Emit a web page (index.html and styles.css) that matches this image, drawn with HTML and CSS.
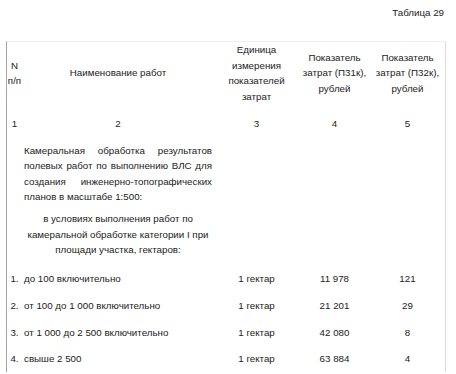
FILE: index.html
```html
<!DOCTYPE html>
<html lang="ru">
<head>
<meta charset="utf-8">
<link rel="stylesheet" href="styles.css">
</head>
<body>
<div class="caption">Таблица 29</div>
<table class="norms">
  <colgroup>
    <col class="c1"><col class="c2"><col class="c3"><col class="c4"><col class="c5">
  </colgroup>
  <tr class="head">
    <td class="num">N п/п</td>
    <td>Наименование работ</td>
    <td>Единица измерения показателей затрат</td>
    <td>Показатель затрат (П31к), рублей</td>
    <td>Показатель затрат (П32к), рублей</td>
  </tr>
  <tr class="idx">
    <td class="num">1</td>
    <td>2</td>
    <td>3</td>
    <td>4</td>
    <td>5</td>
  </tr>
  <tr class="desc">
    <td></td>
    <td class="text">
      <p class="just">Камеральная обработка результатов полевых работ по выполнению ВЛС для создания инженерно-топографических планов в масштабе 1:500:</p>
      <p class="center">в условиях выполнения работ по камеральной обработке категории I при площади участка, гектаров:</p>
    </td>
    <td></td>
    <td></td>
    <td></td>
  </tr>
  <tr class="row">
    <td class="num">1.</td>
    <td class="name">до 100 включительно</td>
    <td>1 гектар</td>
    <td>11 978</td>
    <td>121</td>
  </tr>
  <tr class="row">
    <td class="num">2.</td>
    <td class="name">от 100 до 1 000 включительно</td>
    <td>1 гектар</td>
    <td>21 201</td>
    <td>29</td>
  </tr>
  <tr class="row">
    <td class="num">3.</td>
    <td class="name">от 1 000 до 2 500 включительно</td>
    <td>1 гектар</td>
    <td>42 080</td>
    <td>8</td>
  </tr>
  <tr class="row">
    <td class="num">4.</td>
    <td class="name">свыше 2 500</td>
    <td>1 гектар</td>
    <td>63 884</td>
    <td>4</td>
  </tr>
</table>
</body>
</html>
```
FILE: styles.css
```css
html, body {
  margin: 0;
  padding: 0;
  background: #fff;
}
body {
  font-family: "Liberation Sans", Arial, sans-serif;
  font-size: 9.75px;
  line-height: 15.5px;
  color: #222;
}
.caption {
  text-align: right;
  padding: 5px 12px 0 0;
  height: 15.5px;
  margin-bottom: 20.5px;
}
.norms {
  margin-left: 6px;
  width: 440px;
  box-sizing: border-box;
  table-layout: fixed;
  border-collapse: separate;
  border-spacing: 0;
  border-left: 1px solid #a4a4a4;
  border-top: 1px solid #eeeeee;
  border-right: 1px solid #dddddd;
}
.c1 { width: 15px; }
.c2 { width: 192px; }
.c3 { width: 85px; }
.c4 { width: 71px; }
.c5 { width: 75px; }
.norms td {
  padding: 5.6px 2px;
  text-align: center;
  vertical-align: middle;
}
.norms td.num {
  padding-left: 0;
  padding-right: 0;
  white-space: nowrap;
}
.head td {
  padding-top: 0;
  padding-bottom: 6px;
}
.head td.num {
  white-space: normal;
}
.desc td {
  padding-top: 6px;
  padding-bottom: 8px;
}
.text p {
  margin: 0;
}
.text .just {
  text-align: justify;
  margin-bottom: 6.5px;
}
.text .center {
  text-align: center;
}
.norms td.name {
  text-align: left;
}
```
